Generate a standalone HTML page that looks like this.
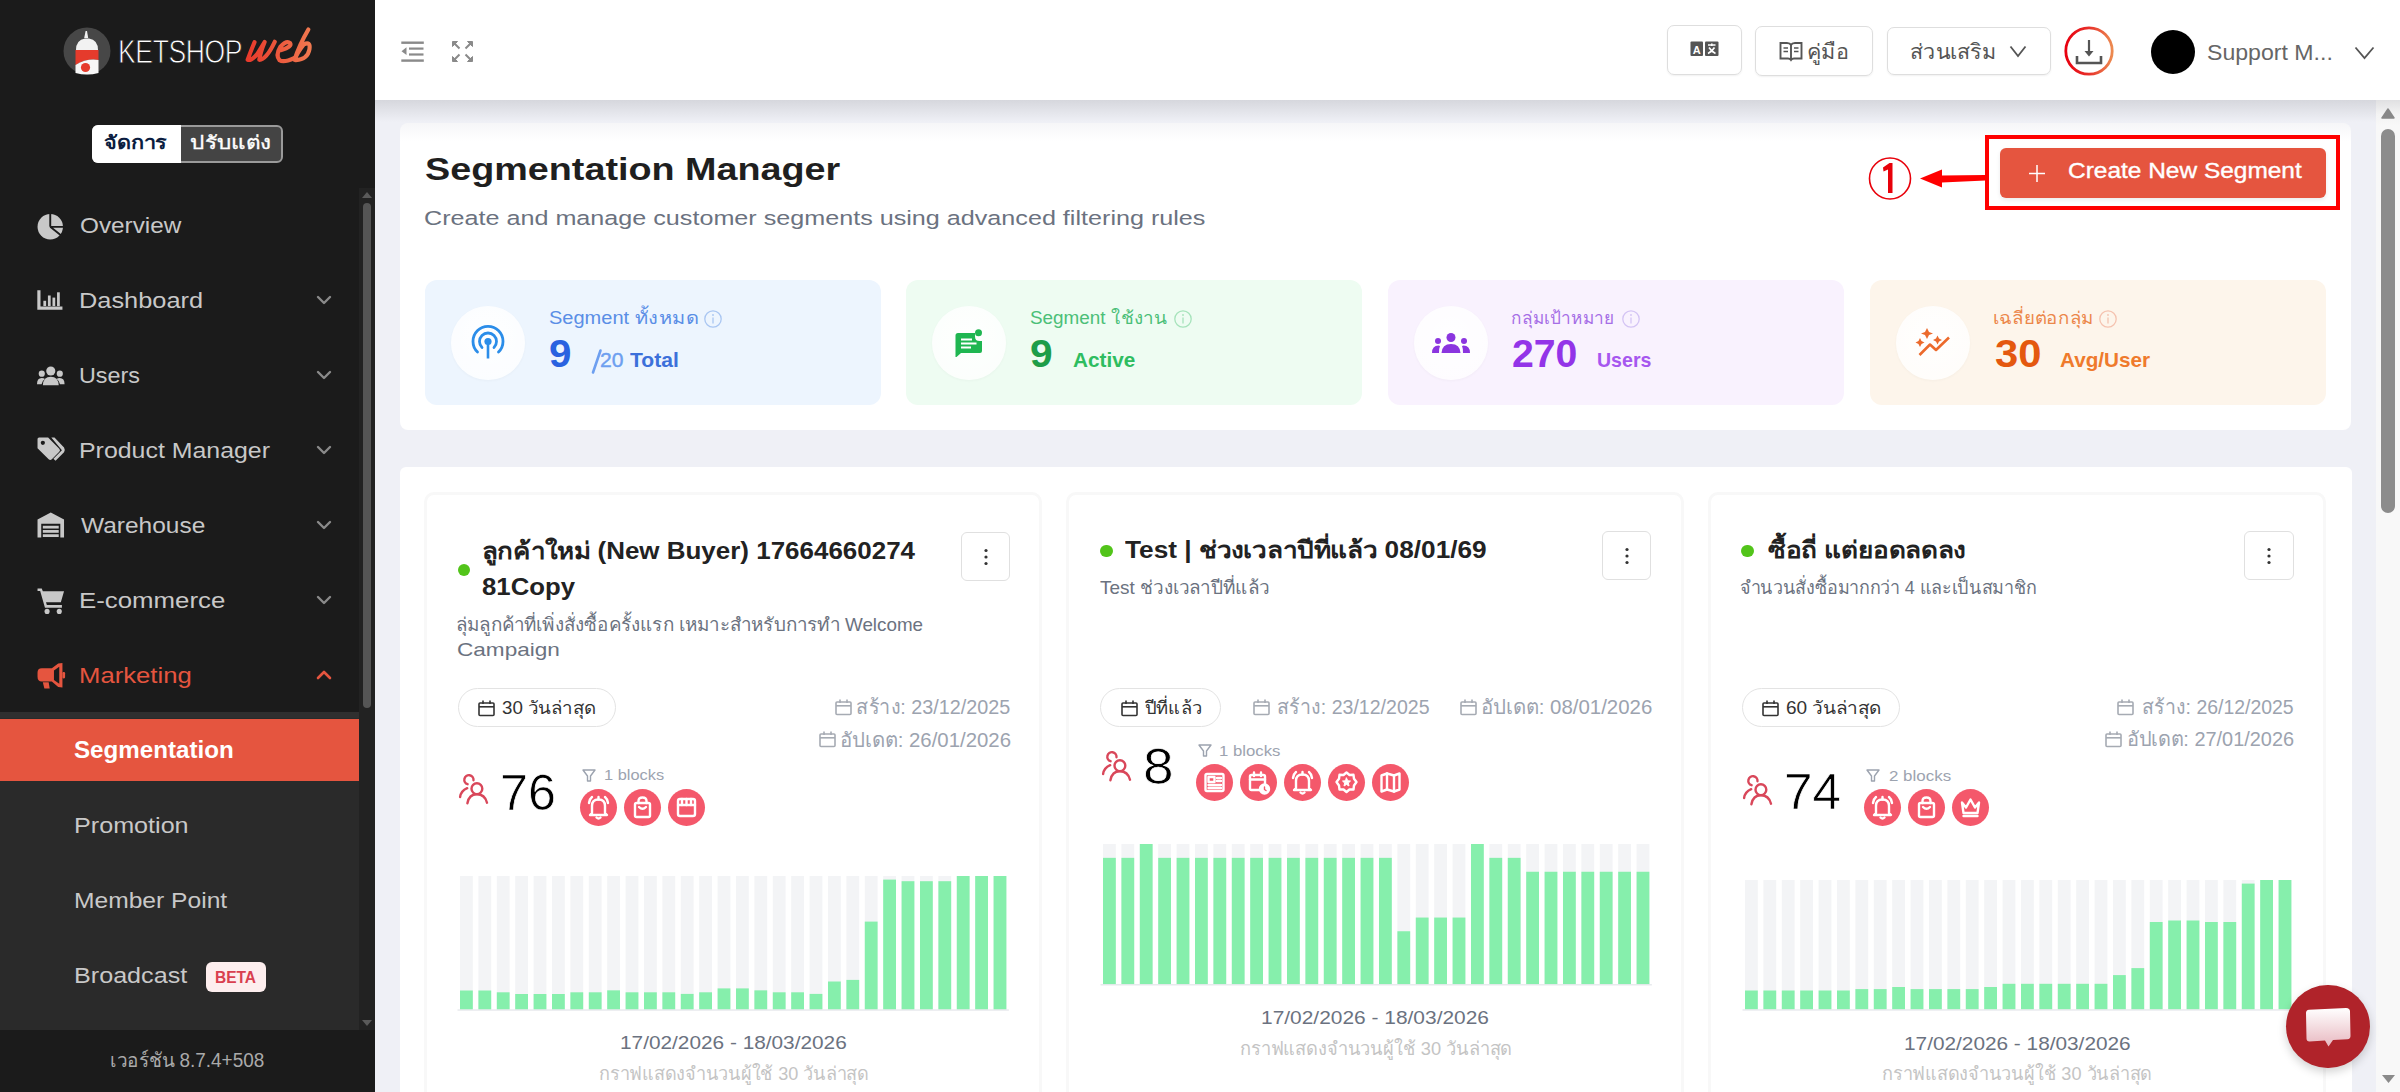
<!DOCTYPE html>
<html><head><meta charset="utf-8"><title>Segmentation Manager</title>
<style>
html,body{margin:0;padding:0;width:2400px;height:1092px;overflow:hidden;background:#eff0f6;font-family:"Liberation Sans",sans-serif;}
body{position:relative;}
</style></head><body>
<div style="position:absolute;left:0px;top:0px;width:375px;height:1092px;background:#1b1b1b"></div>
<svg style="position:absolute;left:63px;top:27px;overflow:visible;" width="48" height="48" viewBox="0 0 48 48"><circle cx="24" cy="24" r="23.5" fill="#474747"/>
<path d="M21.2 11 L22.6 4 L24 4 L25.2 11 Z" fill="#f2f2f2"/>
<path d="M13 23 Q13 13 22 11.5 L26 11.5 Q35 13 35 23 Z" fill="#f2f2f2"/>
<path d="M12.5 23 L35.5 23 L35.5 33 Q24 31 12.5 38 Z" fill="#e53b2c"/>
<path d="M12.5 38 Q24 31 35.5 33 L35.5 46 Q24 49 12.5 46 Z" fill="#f7f7f7"/>
<circle cx="22.5" cy="40.5" r="4.6" fill="#e53b2c"/></svg>
<div style="transform:scaleX(0.8176);position:absolute;left:117.55px;top:35.99px;font-family:'Liberation Sans', sans-serif;font-size:32.5px;line-height:32.5px;font-weight:400;color:#ffffff;white-space:nowrap;transform-origin:0 0;letter-spacing:-0.5px;-webkit-text-stroke:0.9px #1b1b1b">KETSHOP</div>
<svg style="position:absolute;left:240px;top:22px;overflow:visible;" width="80" height="48" viewBox="0 0 1820 1092"><defs><linearGradient id="wg" gradientUnits="userSpaceOnUse" x1="150" x2="1650" y1="0" y2="0"><stop offset="0" stop-color="#e8392b"/><stop offset="1" stop-color="#f07a50"/></linearGradient></defs>
<g fill="none" stroke="url(#wg)" stroke-width="95" stroke-linecap="round" stroke-linejoin="round">
<path d="M330 460 Q230 700 175 860 Q260 890 400 720 L560 455 Q460 700 440 860 Q600 850 790 450"/>
<path d="M940 640 Q1190 560 1140 480 Q1060 410 920 560 Q800 760 900 870 Q1000 930 1230 820"/>
<path d="M1555 170 Q1350 520 1240 860 Q1300 700 1450 510 Q1610 430 1580 620 Q1540 850 1270 870"/>
</g></svg>
<div style="position:absolute;left:92px;top:125px;width:191px;height:38px;background:#444;border:2px solid #9a9a9a;border-radius:6px;box-sizing:border-box"></div>
<div style="position:absolute;left:92px;top:125px;width:89px;height:38px;background:#fff;border-radius:6px 0 0 6px"></div>
<div style="transform:scaleX(1.1698);position:absolute;left:103.83px;top:133.84px;font-family:'Liberation Sans', sans-serif;font-size:18.5px;line-height:18.5px;font-weight:700;color:#0b1d40;white-space:nowrap;transform-origin:0 0;">จัดการ</div>
<div style="transform:scaleX(1.2154);position:absolute;left:189.78px;top:133.84px;font-family:'Liberation Sans', sans-serif;font-size:18.5px;line-height:18.5px;font-weight:400;color:#ffffff;white-space:nowrap;transform-origin:0 0;-webkit-text-stroke:0.35px #fff">ปรับแต่ง</div>
<div style="transform:scaleX(1.1055);position:absolute;left:79.89px;top:215.08px;font-family:'Liberation Sans', sans-serif;font-size:22px;line-height:22px;font-weight:400;color:#c8c8c8;white-space:nowrap;transform-origin:0 0;">Overview</div>
<svg style="position:absolute;left:36.5px;top:211.5px;overflow:visible;transform:scale(1.06);transform-origin:0 0" width="28" height="28" viewBox="0 0 28 28"><circle cx="12.5" cy="14" r="12" fill="#c8c8c8"/>
<path d="M12.5 14 L12.5 0 M12.5 14 L27 14 M12.5 14 L24 23" stroke="#1b1b1b" stroke-width="1.8"/></svg>
<div style="transform:scaleX(1.1524);position:absolute;left:78.70px;top:290.08px;font-family:'Liberation Sans', sans-serif;font-size:22px;line-height:22px;font-weight:400;color:#c8c8c8;white-space:nowrap;transform-origin:0 0;">Dashboard</div>
<svg style="position:absolute;left:36.5px;top:286.5px;overflow:visible;transform:scale(1.06);transform-origin:0 0" width="28" height="28" viewBox="0 0 28 28"><path d="M1.8 3 L1.8 20 L24 20" fill="none" stroke="#c8c8c8" stroke-width="3"/>
<rect x="6" y="13" width="2.6" height="5" fill="#c8c8c8"/><rect x="10.3" y="8" width="2.6" height="10" fill="#c8c8c8"/>
<rect x="14.6" y="10" width="2.6" height="8" fill="#c8c8c8"/><rect x="18.9" y="5" width="2.6" height="13" fill="#c8c8c8"/></svg>
<svg style="position:absolute;left:316px;top:294px;overflow:visible;" width="16" height="12" viewBox="0 0 16 12"><path d="M2 3 L8 9 L14 3" fill="none" stroke="#8a8a8a" stroke-width="2.4" stroke-linecap="round" stroke-linejoin="round"/></svg>
<div style="transform:scaleX(1.0618);position:absolute;left:78.88px;top:365.08px;font-family:'Liberation Sans', sans-serif;font-size:22px;line-height:22px;font-weight:400;color:#c8c8c8;white-space:nowrap;transform-origin:0 0;">Users</div>
<svg style="position:absolute;left:36.5px;top:361.5px;overflow:visible;transform:scale(1.06);transform-origin:0 0" width="28" height="28" viewBox="0 0 28 28"><circle cx="13" cy="8.5" r="4.3" fill="#c8c8c8"/><path d="M5.5 22 Q6 14 13 14 Q20 14 20.5 22 Z" fill="#c8c8c8"/>
<circle cx="4.5" cy="11" r="2.9" fill="#c8c8c8"/><path d="M0 21 Q0 15 4.5 15 Q6.5 15 7.5 16 Q4.5 18 4.3 21 Z" fill="#c8c8c8"/>
<circle cx="21.5" cy="11" r="2.9" fill="#c8c8c8"/><path d="M26 21 Q26 15 21.5 15 Q19.5 15 18.5 16 Q21.5 18 21.7 21 Z" fill="#c8c8c8"/></svg>
<svg style="position:absolute;left:316px;top:369px;overflow:visible;" width="16" height="12" viewBox="0 0 16 12"><path d="M2 3 L8 9 L14 3" fill="none" stroke="#8a8a8a" stroke-width="2.4" stroke-linecap="round" stroke-linejoin="round"/></svg>
<div style="transform:scaleX(1.1317);position:absolute;left:78.74px;top:440.08px;font-family:'Liberation Sans', sans-serif;font-size:22px;line-height:22px;font-weight:400;color:#c8c8c8;white-space:nowrap;transform-origin:0 0;">Product Manager</div>
<svg style="position:absolute;left:36.5px;top:436.5px;overflow:visible;transform:scale(1.06);transform-origin:0 0" width="28" height="28" viewBox="0 0 28 28"><path d="M0.5 2 L0.5 10.5 L11 21 Q12.5 22.5 14 21 L21 14 Q22.5 12.5 21 11 L10.5 0.5 L2 0.5 Q0.5 0.5 0.5 2 Z" fill="#c8c8c8"/>
<circle cx="5.5" cy="5.5" r="2" fill="#1b1b1b"/>
<path d="M13.5 0.5 L16.5 0.5 L25.5 10 Q27 12.5 25.5 14.5 L17.5 22.5 L15.5 20.5 L23.5 12.5 Z" fill="#c8c8c8"/></svg>
<svg style="position:absolute;left:316px;top:444px;overflow:visible;" width="16" height="12" viewBox="0 0 16 12"><path d="M2 3 L8 9 L14 3" fill="none" stroke="#8a8a8a" stroke-width="2.4" stroke-linecap="round" stroke-linejoin="round"/></svg>
<div style="transform:scaleX(1.1126);position:absolute;left:81.00px;top:515.08px;font-family:'Liberation Sans', sans-serif;font-size:22px;line-height:22px;font-weight:400;color:#c8c8c8;white-space:nowrap;transform-origin:0 0;">Warehouse</div>
<svg style="position:absolute;left:36.5px;top:511.5px;overflow:visible;transform:scale(1.06);transform-origin:0 0" width="28" height="28" viewBox="0 0 28 28"><path d="M0.5 7 L13 0.5 L25.5 7 L25.5 24 L22 24 L22 11 L4 11 L4 24 L0.5 24 Z" fill="#c8c8c8"/>
<rect x="5.5" y="13" width="15" height="2.6" fill="#c8c8c8"/><rect x="5.5" y="17" width="15" height="2.6" fill="#c8c8c8"/><rect x="5.5" y="21" width="15" height="2.6" fill="#c8c8c8"/></svg>
<svg style="position:absolute;left:316px;top:519px;overflow:visible;" width="16" height="12" viewBox="0 0 16 12"><path d="M2 3 L8 9 L14 3" fill="none" stroke="#8a8a8a" stroke-width="2.4" stroke-linecap="round" stroke-linejoin="round"/></svg>
<div style="transform:scaleX(1.1738);position:absolute;left:78.65px;top:590.08px;font-family:'Liberation Sans', sans-serif;font-size:22px;line-height:22px;font-weight:400;color:#c8c8c8;white-space:nowrap;transform-origin:0 0;">E-commerce</div>
<svg style="position:absolute;left:36.5px;top:586.5px;overflow:visible;transform:scale(1.06);transform-origin:0 0" width="28" height="28" viewBox="0 0 28 28"><path d="M0.5 1.5 L4.5 1.5 L5.5 4 L25.5 4 L22.5 14.5 L8.5 14.5 L9.3 17 L23.5 17 L23.5 19.5 L7.5 19.5 L3 3.8 L0.5 3.8 Z" fill="#c8c8c8"/>
<circle cx="9.5" cy="23" r="2.4" fill="#c8c8c8"/><circle cx="21" cy="23" r="2.4" fill="#c8c8c8"/></svg>
<svg style="position:absolute;left:316px;top:594px;overflow:visible;" width="16" height="12" viewBox="0 0 16 12"><path d="M2 3 L8 9 L14 3" fill="none" stroke="#8a8a8a" stroke-width="2.4" stroke-linecap="round" stroke-linejoin="round"/></svg>
<div style="transform:scaleX(1.1667);position:absolute;left:78.67px;top:665.08px;font-family:'Liberation Sans', sans-serif;font-size:22px;line-height:22px;font-weight:400;color:#e5553f;white-space:nowrap;transform-origin:0 0;">Marketing</div>
<svg style="position:absolute;left:36.5px;top:661.5px;overflow:visible;transform:scale(1.06);transform-origin:0 0" width="28" height="28" viewBox="0 0 28 28"><path d="M20 1.5 L24 1 L24 24 L20 23.5 L14 18.5 L6 18.5 L4.5 18.5 Q0.5 18.5 0.5 14 L0.5 10 Q0.5 6 4.5 6 L14 6 Z" fill="#e5553f"/>
<path d="M16 8 L21 4.5 L21 20.5 L16 17 Z" fill="#1b1b1b"/>
<path d="M5.5 19 L11 19 L12 25 L7 25 Z" fill="#e5553f"/>
<rect x="24" y="9.5" width="2.5" height="6" rx="1" fill="#e5553f"/></svg>
<svg style="position:absolute;left:316px;top:669px;overflow:visible;" width="16" height="12" viewBox="0 0 16 12"><path d="M2 9 L8 3 L14 9" fill="none" stroke="#e5553f" stroke-width="2.6" stroke-linecap="round" stroke-linejoin="round"/></svg>
<div style="position:absolute;left:0px;top:712px;width:359px;height:318px;background:#2a2a2a"></div>
<div style="position:absolute;left:0px;top:712px;width:359px;height:6px;background:#2f2f2f"></div>
<div style="position:absolute;left:0px;top:718.5px;width:359px;height:62.5px;background:#e5553f"></div>
<div style="transform:scaleX(1.0500);position:absolute;left:73.95px;top:739.23px;font-family:'Liberation Sans', sans-serif;font-size:23.0px;line-height:23.0px;font-weight:700;color:#ffffff;white-space:nowrap;transform-origin:0 0;">Segmentation</div>
<div style="transform:scaleX(1.1429);position:absolute;left:73.79px;top:815.08px;font-family:'Liberation Sans', sans-serif;font-size:22.0px;line-height:22.0px;font-weight:400;color:#c8c8c8;white-space:nowrap;transform-origin:0 0;">Promotion</div>
<div style="transform:scaleX(1.1185);position:absolute;left:73.82px;top:890.08px;font-family:'Liberation Sans', sans-serif;font-size:22.0px;line-height:22.0px;font-weight:400;color:#c8c8c8;white-space:nowrap;transform-origin:0 0;">Member Point</div>
<div style="transform:scaleX(1.1429);position:absolute;left:73.79px;top:965.08px;font-family:'Liberation Sans', sans-serif;font-size:22.0px;line-height:22.0px;font-weight:400;color:#c8c8c8;white-space:nowrap;transform-origin:0 0;">Broadcast</div>
<div style="position:absolute;left:206px;top:961.5px;width:60px;height:30px;background:#fdeeee;border-radius:6px"></div>
<div style="transform:scaleX(0.9683);position:absolute;left:215.03px;top:969.86px;font-family:'Liberation Sans', sans-serif;font-size:16.0px;line-height:16.0px;font-weight:700;color:#d9404f;white-space:nowrap;transform-origin:0 0;">BETA</div>
<div style="position:absolute;left:359px;top:188px;width:16px;height:842px;background:#222222"></div>
<svg style="position:absolute;left:361px;top:190px;overflow:visible;" width="12" height="10" viewBox="0 0 12 10"><path d="M1 8 L6 2 L11 8 Z" fill="#5a5a5a"/></svg>
<div style="position:absolute;left:362.5px;top:203px;width:8.5px;height:505px;background:#555;border-radius:5px"></div>
<svg style="position:absolute;left:361px;top:1018px;overflow:visible;" width="12" height="10" viewBox="0 0 12 10"><path d="M1 2 L6 8 L11 2 Z" fill="#5a5a5a"/></svg>
<div style="position:absolute;left:0px;top:1030px;width:375px;height:62px;background:#1b1b1b"></div>
<div style="transform:scaleX(0.9720);position:absolute;left:110.03px;top:1050.89px;font-family:'Liberation Sans', sans-serif;font-size:19.5px;line-height:19.5px;font-weight:400;color:#aaaaaa;white-space:nowrap;transform-origin:0 0;">เวอร์ชัน 8.7.4+508</div>
<div style="position:absolute;left:375px;top:0px;width:2025px;height:100px;background:#ffffff"></div>
<div style="position:absolute;left:375px;top:100px;width:2025px;height:22px;background:linear-gradient(#d6d7dd,#eff0f6)"></div>
<svg style="position:absolute;left:401px;top:41px;overflow:visible;" width="24" height="21" viewBox="0 0 24 21"><g fill="#8a8a8a"><rect x="0.3" y="0.5" width="22.5" height="2.4"/><rect x="8" y="6.5" width="14.5" height="2.2"/>
<rect x="8" y="12.4" width="14.5" height="2.2"/><rect x="0.3" y="18.4" width="22.5" height="2.4"/>
<path d="M5.5 6.3 L5.5 14 L0.5 10.2 Z"/></g></svg>
<svg style="position:absolute;left:452px;top:41px;overflow:visible;" width="21" height="21" viewBox="0 0 21 21"><g stroke="#8a8a8a" stroke-width="2" fill="#8a8a8a">
<path d="M1.5 1.5 L7.5 7.5 M19.5 1.5 L13.5 7.5 M1.5 19.5 L7.5 13.5 M19.5 19.5 L13.5 13.5" fill="none"/>
<path d="M0.5 0.5 L5.5 0.5 L0.5 5.5 Z M20.5 0.5 L15.5 0.5 L20.5 5.5 Z M0.5 20.5 L5.5 20.5 L0.5 15.5 Z M20.5 20.5 L15.5 20.5 L20.5 15.5 Z" stroke-width="1"/>
</g></svg>
<div style="position:absolute;left:1666.5px;top:25px;width:75px;height:49.5px;border:1.5px solid #dedede;border-radius:7px;box-sizing:border-box;box-shadow:0 1px 2px rgba(0,0,0,.06)"></div>
<svg style="position:absolute;left:1690px;top:41px;overflow:visible;" width="30" height="16" viewBox="0 0 30 16"><rect x="0.5" y="0.5" width="12.5" height="14.5" rx="1" fill="#555"/><rect x="15" y="0.5" width="13.5" height="14.5" rx="1" fill="#555"/>
<text x="6.8" y="12.5" font-family="Liberation Sans" font-weight="700" font-size="11" fill="#fff" text-anchor="middle">A</text>
<path d="M18 4 L25.5 4 M21.8 2.5 L21.8 5 M19 6.5 Q21.5 10.5 25.5 12.5 M24.5 6.5 Q22 10.5 18 12.5" stroke="#fff" stroke-width="1.6" fill="none"/></svg>
<div style="position:absolute;left:1755px;top:26px;width:118px;height:49.5px;border:1.5px solid #dedede;border-radius:7px;box-sizing:border-box;box-shadow:0 1px 2px rgba(0,0,0,.06)"></div>
<svg style="position:absolute;left:1779px;top:41px;overflow:visible;" width="24" height="20" viewBox="0 0 24 20"><path d="M1.5 2 L8 2 Q11 2 12 4 Q13 2 16 2 L22.5 2 L22.5 17.5 L15 17.5 Q13 17.5 12 19 Q11 17.5 9 17.5 L1.5 17.5 Z M12 4 L12 19" fill="none" stroke="#555" stroke-width="1.9"/>
<path d="M4.5 7 L9 7 M4.5 10.5 L9 10.5 M15 7 L19.5 7 M15 10.5 L19.5 10.5" stroke="#555" stroke-width="1.6"/></svg>
<div style="transform:scaleX(1.0270);position:absolute;left:1806.95px;top:40.92px;font-family:'Liberation Sans', sans-serif;font-size:21.0px;line-height:21.0px;font-weight:400;color:#555555;white-space:nowrap;transform-origin:0 0;">คู่มือ</div>
<div style="position:absolute;left:1886.5px;top:26.5px;width:164px;height:48.5px;border:1.5px solid #dedede;border-radius:7px;box-sizing:border-box;box-shadow:0 1px 2px rgba(0,0,0,.06)"></div>
<div style="transform:scaleX(1.0247);position:absolute;left:1909.98px;top:40.92px;font-family:'Liberation Sans', sans-serif;font-size:21.0px;line-height:21.0px;font-weight:400;color:#555555;white-space:nowrap;transform-origin:0 0;">ส่วนเสริม</div>
<svg style="position:absolute;left:2009px;top:45px;overflow:visible;" width="18" height="13" viewBox="0 0 18 13"><path d="M1.5 1.5 L9 11 L16.5 1.5" fill="none" stroke="#555" stroke-width="1.8"/></svg>
<svg style="position:absolute;left:2063px;top:25px;overflow:visible;" width="52" height="52" viewBox="0 0 52 52"><defs><linearGradient id="dg" x1="0" x2="1" y1="0" y2="0"><stop offset="0" stop-color="#e8000f"/><stop offset="0.5" stop-color="#e8302a"/><stop offset="1" stop-color="#ec8a50"/></linearGradient></defs>
<circle cx="26" cy="26" r="23.2" fill="none" stroke="url(#dg)" stroke-width="2.8"/>
<path d="M26 15 L26 28" stroke="#555" stroke-width="2.2"/><path d="M21.5 26 L26 31.5 L30.5 26 Z" fill="#555"/>
<path d="M14 31 L14 38 L38 38 L38 31" fill="none" stroke="#555" stroke-width="2.6"/></svg>
<div style="position:absolute;left:2151px;top:30px;width:44px;height:44px;background:#000;border-radius:50%"></div>
<div style="transform:scaleX(1.0746);position:absolute;left:2206.89px;top:42.50px;font-family:'Liberation Sans', sans-serif;font-size:21.5px;line-height:21.5px;font-weight:400;color:#666666;white-space:nowrap;transform-origin:0 0;">Support M...</div>
<svg style="position:absolute;left:2354px;top:46px;overflow:visible;" width="21" height="14" viewBox="0 0 21 14"><path d="M1.5 1.5 L10.5 12 L19.5 1.5" fill="none" stroke="#555" stroke-width="1.8"/></svg>
<div style="position:absolute;left:2376px;top:100px;width:24px;height:992px;background:linear-gradient(#e0e0e2 0px,#f3f3f3 14px,#f8f8f8 26px)"></div>
<svg style="position:absolute;left:2380px;top:107px;overflow:visible;" width="16" height="13" viewBox="0 0 16 13"><path d="M2 11 L8 2 L14 11 Z" fill="#888" stroke="#888" stroke-width="1.5" stroke-linejoin="round"/></svg>
<div style="position:absolute;left:2381px;top:128.5px;width:14px;height:384px;background:#8c8c8c;border-radius:7px"></div>
<svg style="position:absolute;left:2381px;top:1073px;overflow:visible;" width="15" height="12" viewBox="0 0 15 12"><path d="M1 2 L7.5 10 L14 2 Z" fill="#8a8a8a"/></svg>
<div style="position:absolute;left:400px;top:122.5px;width:1951px;height:307.5px;background:linear-gradient(#f6f6f8 0px,#fbfbfc 10px,#fff 18px);border-radius:8px"></div>
<div style="transform:scaleX(1.1795);position:absolute;left:424.82px;top:153.01px;font-family:'Liberation Sans', sans-serif;font-size:32.0px;line-height:32.0px;font-weight:700;color:#1f1f1f;white-space:nowrap;transform-origin:0 0;">Segmentation Manager</div>
<div style="transform:scaleX(1.3043);position:absolute;left:423.70px;top:209.06px;font-family:'Liberation Sans', sans-serif;font-size:19.3px;line-height:19.3px;font-weight:400;color:#6b7280;white-space:nowrap;transform-origin:0 0;">Create and manage customer segments using advanced filtering rules</div>
<div style="position:absolute;left:2000px;top:147.5px;width:326px;height:50px;background:#e5553f;border-radius:6px;box-shadow:0 2px 4px rgba(0,0,0,.08)"></div>
<svg style="position:absolute;left:2028px;top:164px;overflow:visible;" width="18" height="19" viewBox="0 0 18 19"><path d="M9 1 L9 18 M1 9.5 L17 9.5" stroke="#fff" stroke-width="1.5"/></svg>
<div style="transform:scaleX(1.1373);position:absolute;left:2067.86px;top:161.25px;font-family:'Liberation Sans', sans-serif;font-size:21.5px;line-height:21.5px;font-weight:400;color:#ffffff;white-space:nowrap;transform-origin:0 0;-webkit-text-stroke:0.35px #fff">Create New Segment</div>
<div style="position:absolute;left:1985px;top:135px;width:355px;height:74.5px;border:4.8px solid #ff0000;box-sizing:border-box"></div>
<svg style="position:absolute;left:1868px;top:157px;overflow:visible;" width="44" height="44" viewBox="0 0 44 44"><circle cx="22" cy="21.5" r="20.5" fill="none" stroke="#e8000a" stroke-width="1.6"/></svg>
<svg style="position:absolute;left:1880px;top:162px;overflow:visible;" width="16" height="32" viewBox="0 0 16 32"><path d="M3 5.5 L9.5 1 L12.5 1 L12.5 31 L8 31 L8 7.5 L3.5 9.5 Z" fill="#e8000a"/></svg>
<svg style="position:absolute;left:1918px;top:166px;overflow:visible;" width="70" height="26" viewBox="0 0 70 26"><path d="M24 9.5 L67.5 9 L67.5 14.5 L24 16.5 Z" fill="#ff0000"/><path d="M2 12.5 L24 3.5 L24 21.5 Z" fill="#ff0000"/></svg>
<svg style="position:absolute;left:590px;top:348px;overflow:visible;z-index:2" width="14" height="26" viewBox="0 0 14 26"><path d="M3 24.5 L10.5 2.5" stroke="#6d9ff0" stroke-width="2.6" stroke-linecap="round"/></svg>
<div style="position:absolute;left:425px;top:280px;width:456px;height:125px;background:#edf5fe;border-radius:12px"></div>
<div style="position:absolute;left:450.5px;top:305.5px;width:74px;height:74px;background:radial-gradient(circle at 50% 40%,rgba(255,255,255,.95),rgba(255,255,255,.75));border-radius:50%;box-shadow:0 1px 3px rgba(0,0,0,.03)"></div>
<svg style="position:absolute;left:470.6px;top:325.6px;overflow:visible;" width="34" height="34" viewBox="0 0 34 34"><g stroke="#2b8de9" fill="none" stroke-width="2.8" stroke-linecap="round">
<path d="M6.5 26 A15 15 0 1 1 27.5 26"/><path d="M11 21.5 A8.5 8.5 0 1 1 23 21.5"/>
<path d="M17 16 L17 32.5" stroke-width="2.6" stroke-linecap="butt"/></g>
<circle cx="17" cy="15.5" r="3.6" fill="#2b8de9"/></svg>
<div style="transform:scaleX(1.1434);position:absolute;left:548.93px;top:309.64px;font-family:'Liberation Sans', sans-serif;font-size:17.5px;line-height:17.5px;font-weight:400;color:#5a8ee6;white-space:nowrap;transform-origin:0 0;">Segment ทั้งหมด</div>
<svg style="position:absolute;left:704px;top:310px;overflow:visible;" width="18" height="18" viewBox="0 0 18 18"><circle cx="9" cy="9" r="8.2" fill="none" stroke="#a9c6f2" stroke-width="1.3"/><path d="M9 7.5 L9 13.5" stroke="#a9c6f2" stroke-width="1.3"/><circle cx="9" cy="5" r="0.9" fill="#a9c6f2"/></svg>
<div style="transform:scaleX(1.0211);position:absolute;left:548.56px;top:334.46px;font-family:'Liberation Sans', sans-serif;font-size:39.5px;line-height:39.5px;font-weight:700;color:#2a62e0;white-space:nowrap;transform-origin:0 0;">9</div>
<div style="transform:scaleX(1.0667);position:absolute;left:600.17px;top:350.84px;font-family:'Liberation Sans', sans-serif;font-size:19.8px;line-height:19.8px;font-weight:400;color:#6d9ff0;white-space:nowrap;transform-origin:0 0;-webkit-text-stroke:0.4px #6d9ff0">20</div>
<div style="transform:scaleX(1.0667);position:absolute;left:630.00px;top:350.84px;font-family:'Liberation Sans', sans-serif;font-size:19.8px;line-height:19.8px;font-weight:700;color:#3c70da;white-space:nowrap;transform-origin:0 0;">Total</div>
<div style="position:absolute;left:906px;top:280px;width:456px;height:125px;background:#eefcf2;border-radius:12px"></div>
<div style="position:absolute;left:931.5px;top:305.5px;width:74px;height:74px;background:radial-gradient(circle at 50% 40%,rgba(255,255,255,.95),rgba(255,255,255,.75));border-radius:50%;box-shadow:0 1px 3px rgba(0,0,0,.03)"></div>
<svg style="position:absolute;left:955px;top:329px;overflow:visible;" width="28" height="28" viewBox="0 0 28 28"><path d="M3 4 L20 4 L20 7.5 Q20 12 24.5 12 L27 12 L27 22 Q27 24 25 24 L6 24 L1.5 28 L0.5 28 L0.5 6.5 Q0.5 4 3 4 Z" fill="#1fb651"/>
<circle cx="23.5" cy="3.8" r="3.5" fill="#1fb651"/>
<rect x="6" y="9.5" width="11" height="2" fill="#fff"/><rect x="6" y="13.5" width="15.5" height="2" fill="#fff"/><rect x="6" y="17.5" width="10" height="2" fill="#fff"/></svg>
<div style="transform:scaleX(1.0794);position:absolute;left:1029.96px;top:309.64px;font-family:'Liberation Sans', sans-serif;font-size:17.5px;line-height:17.5px;font-weight:400;color:#4bbf78;white-space:nowrap;transform-origin:0 0;">Segment ใช้งาน</div>
<svg style="position:absolute;left:1174px;top:310px;overflow:visible;" width="18" height="18" viewBox="0 0 18 18"><circle cx="9" cy="9" r="8.2" fill="none" stroke="#a6e3bb" stroke-width="1.3"/><path d="M9 7.5 L9 13.5" stroke="#a6e3bb" stroke-width="1.3"/><circle cx="9" cy="5" r="0.9" fill="#a6e3bb"/></svg>
<div style="transform:scaleX(1.0316);position:absolute;left:1029.54px;top:334.46px;font-family:'Liberation Sans', sans-serif;font-size:39.5px;line-height:39.5px;font-weight:700;color:#1e9d48;white-space:nowrap;transform-origin:0 0;">9</div>
<div style="transform:scaleX(1.0474);position:absolute;left:1072.95px;top:350.84px;font-family:'Liberation Sans', sans-serif;font-size:19.8px;line-height:19.8px;font-weight:700;color:#2ebd60;white-space:nowrap;transform-origin:0 0;">Active</div>
<div style="position:absolute;left:1388px;top:280px;width:456px;height:125px;background:#f9f2fe;border-radius:12px"></div>
<div style="position:absolute;left:1413.5px;top:305.5px;width:74px;height:74px;background:radial-gradient(circle at 50% 40%,rgba(255,255,255,.95),rgba(255,255,255,.75));border-radius:50%;box-shadow:0 1px 3px rgba(0,0,0,.03)"></div>
<svg style="position:absolute;left:1432px;top:332.5px;overflow:visible;" width="38" height="20" viewBox="0 0 38 20"><g fill="#8b35df"><circle cx="19" cy="4.5" r="4.5"/><path d="M9.5 20 Q10 11 19 11 Q28 11 28.5 20 Z"/>
<circle cx="6" cy="8" r="3"/><path d="M0 20 Q0 12.5 6.5 12.5 L8 13 Q7 15 7 20 Z"/>
<circle cx="32" cy="8" r="3"/><path d="M38 20 Q38 12.5 31.5 12.5 L30 13 Q31 15 31 20 Z"/></g></svg>
<div style="transform:scaleX(0.9806);position:absolute;left:1511.03px;top:309.64px;font-family:'Liberation Sans', sans-serif;font-size:17.5px;line-height:17.5px;font-weight:400;color:#a66ee6;white-space:nowrap;transform-origin:0 0;">กลุ่มเป้าหมาย</div>
<svg style="position:absolute;left:1621.5px;top:310px;overflow:visible;" width="18" height="18" viewBox="0 0 18 18"><circle cx="9" cy="9" r="8.2" fill="none" stroke="#d4c4f4" stroke-width="1.3"/><path d="M9 7.5 L9 13.5" stroke="#d4c4f4" stroke-width="1.3"/><circle cx="9" cy="5" r="0.9" fill="#d4c4f4"/></svg>
<div style="transform:scaleX(0.9921);position:absolute;left:1511.61px;top:334.46px;font-family:'Liberation Sans', sans-serif;font-size:39.5px;line-height:39.5px;font-weight:700;color:#9334e8;white-space:nowrap;transform-origin:0 0;">270</div>
<div style="transform:scaleX(0.9887);position:absolute;left:1597.21px;top:350.84px;font-family:'Liberation Sans', sans-serif;font-size:19.8px;line-height:19.8px;font-weight:700;color:#a657ef;white-space:nowrap;transform-origin:0 0;">Users</div>
<div style="position:absolute;left:1870px;top:280px;width:456px;height:125px;background:#fdf5eb;border-radius:12px"></div>
<div style="position:absolute;left:1895.5px;top:305.5px;width:74px;height:74px;background:radial-gradient(circle at 50% 40%,rgba(255,255,255,.95),rgba(255,255,255,.75));border-radius:50%;box-shadow:0 1px 3px rgba(0,0,0,.03)"></div>
<svg style="position:absolute;left:1915.6px;top:327.5px;overflow:visible;" width="34" height="28" viewBox="0 0 34 28"><g fill="#ec6a2c"><path d="M11 0 L13 4 L17 5.5 L13 7 L11 11 L9 7 L5 5.5 L9 4 Z"/>
<path d="M4 10 L5.5 13 L8.5 14.5 L5.5 16 L4 19 L2.5 16 L-0.5 14.5 L2.5 13 Z"/>
<path d="M21.5 7.5 L23 10.5 L26 12 L23 13.5 L21.5 16.5 L20 13.5 L17 12 L20 10.5 Z"/></g>
<path d="M3.5 27 L14 16.5 L20 22 L33 9.5" fill="none" stroke="#ec6a2c" stroke-width="2.6" stroke-linejoin="round"/></svg>
<div style="transform:scaleX(1.0652);position:absolute;left:1992.90px;top:309.64px;font-family:'Liberation Sans', sans-serif;font-size:17.5px;line-height:17.5px;font-weight:400;color:#ec874a;white-space:nowrap;transform-origin:0 0;">เฉลี่ยต่อกลุ่ม</div>
<svg style="position:absolute;left:2099px;top:310px;overflow:visible;" width="18" height="18" viewBox="0 0 18 18"><circle cx="9" cy="9" r="8.2" fill="none" stroke="#f5c3b0" stroke-width="1.3"/><path d="M9 7.5 L9 13.5" stroke="#f5c3b0" stroke-width="1.3"/><circle cx="9" cy="5" r="0.9" fill="#f5c3b0"/></svg>
<div style="transform:scaleX(1.0571);position:absolute;left:1994.56px;top:334.46px;font-family:'Liberation Sans', sans-serif;font-size:39.5px;line-height:39.5px;font-weight:700;color:#e4580f;white-space:nowrap;transform-origin:0 0;">30</div>
<div style="transform:scaleX(1.0471);position:absolute;left:2059.95px;top:350.84px;font-family:'Liberation Sans', sans-serif;font-size:19.8px;line-height:19.8px;font-weight:700;color:#ef7a2c;white-space:nowrap;transform-origin:0 0;">Avg/User</div>
<div style="position:absolute;left:400px;top:467px;width:1952px;height:640px;background:#fff;border-radius:6px"></div>
<div style="position:absolute;left:424px;top:492px;width:618px;height:620px;background:#fff;border:3px solid #f8f8f8;border-radius:10px;box-sizing:border-box"></div>
<div style="position:absolute;left:1066px;top:492px;width:618px;height:620px;background:#fff;border:3px solid #f8f8f8;border-radius:10px;box-sizing:border-box"></div>
<div style="position:absolute;left:1708px;top:492px;width:618px;height:620px;background:#fff;border:3px solid #f8f8f8;border-radius:10px;box-sizing:border-box"></div>
<div style="position:absolute;left:457.5px;top:563.75px;width:12.5px;height:12.5px;background:#52c41a;border-radius:50%"></div>
<div style="transform:scaleX(1.1049);position:absolute;left:481.90px;top:539.56px;font-family:'Liberation Sans', sans-serif;font-size:23.5px;line-height:23.5px;font-weight:700;color:#222222;white-space:nowrap;transform-origin:0 0;">ลูกค้าใหม่ (New Buyer) 17664660274</div>
<div style="transform:scaleX(1.0952);position:absolute;left:481.90px;top:576.41px;font-family:'Liberation Sans', sans-serif;font-size:23.5px;line-height:23.5px;font-weight:700;color:#222222;white-space:nowrap;transform-origin:0 0;">81Copy</div>
<div style="transform:scaleX(1.0175);position:absolute;left:455.96px;top:615.64px;font-family:'Liberation Sans', sans-serif;font-size:18.5px;line-height:18.5px;font-weight:400;color:#6b7280;white-space:nowrap;transform-origin:0 0;">ลุ่มลูกค้าที่เพิ่งสั่งซื้อครั้งแรก เหมาะสำหรับการทำ Welcome</div>
<div style="transform:scaleX(1.2195);position:absolute;left:456.78px;top:641.04px;font-family:'Liberation Sans', sans-serif;font-size:18.5px;line-height:18.5px;font-weight:400;color:#6b7280;white-space:nowrap;transform-origin:0 0;">Campaign</div>
<div style="position:absolute;left:960.5px;top:531.5px;width:49.5px;height:49px;border:1.5px solid #e0e0e0;border-radius:6px;box-sizing:border-box;background:#fff"></div>
<svg style="position:absolute;left:982.5px;top:547.5px;overflow:visible;" width="6" height="18" viewBox="0 0 6 18"><circle cx="3" cy="2.5" r="1.6" fill="#333"/><circle cx="3" cy="9" r="1.6" fill="#333"/><circle cx="3" cy="15.5" r="1.6" fill="#333"/></svg>
<div style="position:absolute;left:457.5px;top:687.5px;width:158px;height:39.5px;border:1.5px solid #e3e3e3;border-radius:20px;box-sizing:border-box;background:#fff"></div>
<svg style="position:absolute;left:478.0px;top:699.5px;overflow:visible;" width="17" height="17" viewBox="0 0 17 17"><rect x="1" y="3" width="15" height="12.5" rx="1" fill="none" stroke="#333" stroke-width="1.6"/>
<path d="M1 6.8 L16 6.8" stroke="#333" stroke-width="1.6"/><path d="M5 0.5 L5 4 M12 0.5 L12 4" stroke="#333" stroke-width="1.6"/></svg>
<div style="transform:scaleX(1.0404);position:absolute;left:501.96px;top:699.26px;font-family:'Liberation Sans', sans-serif;font-size:18.0px;line-height:18.0px;font-weight:400;color:#333333;white-space:nowrap;transform-origin:0 0;">30 วันล่าสุด</div>
<svg style="position:absolute;left:834.5px;top:699px;overflow:visible;" width="17" height="17" viewBox="0 0 17 17"><rect x="1" y="3" width="15" height="12.5" rx="1" fill="none" stroke="#a6abb3" stroke-width="1.6"/>
<path d="M1 6.8 L16 6.8" stroke="#a6abb3" stroke-width="1.6"/><path d="M5 0.5 L5 4 M12 0.5 L12 4" stroke="#a6abb3" stroke-width="1.6"/></svg>
<div style="transform:scaleX(0.9646);position:absolute;left:856.24px;top:697.35px;font-family:'Liberation Sans', sans-serif;font-size:20.5px;line-height:20.5px;font-weight:400;color:#9ca3af;white-space:nowrap;transform-origin:0 0;">สร้าง: 23/12/2025</div>
<svg style="position:absolute;left:818.6px;top:731.4px;overflow:visible;" width="17" height="17" viewBox="0 0 17 17"><rect x="1" y="3" width="15" height="12.5" rx="1" fill="none" stroke="#a6abb3" stroke-width="1.6"/>
<path d="M1 6.8 L16 6.8" stroke="#a6abb3" stroke-width="1.6"/><path d="M5 0.5 L5 4 M12 0.5 L12 4" stroke="#a6abb3" stroke-width="1.6"/></svg>
<div style="transform:scaleX(0.9941);position:absolute;left:840.01px;top:729.75px;font-family:'Liberation Sans', sans-serif;font-size:20.5px;line-height:20.5px;font-weight:400;color:#9ca3af;white-space:nowrap;transform-origin:0 0;">อัปเดต: 26/01/2026</div>
<svg style="position:absolute;left:457.5px;top:774px;overflow:visible;" width="32" height="32" viewBox="0 0 32 32"><g fill="none" stroke="#d9475a" stroke-width="2.4" stroke-linecap="round">
<circle cx="18.9" cy="14.7" r="5.4"/><path d="M9.4 29.3 Q11 20.3 18.9 20.3 Q26.8 20.3 29 28.7"/>
<path d="M15.5 6.2 A4.6 4.6 0 1 0 9.6 10.2"/><path d="M2.1 23 Q3 16.8 9.2 14.2"/></g></svg>
<div style="transform:scaleX(1.0147);position:absolute;left:499.97px;top:767.80px;font-family:'Liberation Sans', sans-serif;font-size:49.5px;line-height:49.5px;font-weight:400;color:#000000;white-space:nowrap;transform-origin:0 0;-webkit-text-stroke:0.7px #fff">76</div>
<svg style="position:absolute;left:582px;top:768.5px;overflow:visible;" width="14" height="13" viewBox="0 0 14 13"><path d="M1 1 L13 1 L8.5 7 L8.5 12 L5.5 12 L5.5 7 Z" fill="none" stroke="#9ca3af" stroke-width="1.4" stroke-linejoin="round"/></svg>
<div style="transform:scaleX(1.1298);position:absolute;left:603.87px;top:768.03px;font-family:'Liberation Sans', sans-serif;font-size:14.5px;line-height:14.5px;font-weight:400;color:#9ca3af;white-space:nowrap;transform-origin:0 0;">1 blocks</div>
<svg style="position:absolute;left:579.5px;top:788.5px;overflow:visible;" width="37" height="37" viewBox="0 0 37 37"><circle cx="18.5" cy="18.5" r="18.5" fill="#f4586b"/><g fill="none" stroke="#fff" stroke-width="2.4" stroke-linecap="round" stroke-linejoin="round"><path d="M12 24 L12 17 Q12 10.5 18.5 10.5 Q25 10.5 25 17 L25 24 L27 26 L10 26 Z"/><path d="M16.5 28.5 Q18.5 30.5 20.5 28.5"/><path d="M9 14 Q9.5 10 12 8 M28 14 Q27.5 10 25 8"/><path d="M18.5 8 L18.5 10.5"/></g></svg>
<svg style="position:absolute;left:623.5px;top:788.5px;overflow:visible;" width="37" height="37" viewBox="0 0 37 37"><circle cx="18.5" cy="18.5" r="18.5" fill="#f4586b"/><g fill="none" stroke="#fff" stroke-width="2.4" stroke-linecap="round" stroke-linejoin="round"><rect x="11" y="14" width="15" height="14" rx="1.5"/><path d="M14.5 14 L14.5 12 Q14.5 8.5 18.5 8.5 Q22.5 8.5 22.5 12 L22.5 14"/><path d="M15 18 Q18.5 21.5 22 18"/></g></svg>
<svg style="position:absolute;left:667.5px;top:788.5px;overflow:visible;" width="37" height="37" viewBox="0 0 37 37"><circle cx="18.5" cy="18.5" r="18.5" fill="#f4586b"/><g fill="none" stroke="#fff" stroke-width="2.4" stroke-linecap="round" stroke-linejoin="round"><rect x="10" y="10" width="17" height="17" rx="2"/><path d="M10 16 L27 16"/><path d="M14 10 L14 16 M18.5 10 L18.5 16 M23 10 L23 16"/></g></svg>
<svg style="position:absolute;left:460.1px;top:876.1px;overflow:visible;" width="546.4" height="135.6" viewBox="0 0 546.4 135.6"><rect x="0.00" y="0" width="12.8" height="133.60" fill="#f3f4f6"/><rect x="0.00" y="114.50" width="12.8" height="19.10" fill="#86efac"/><rect x="18.40" y="0" width="12.8" height="133.60" fill="#f3f4f6"/><rect x="18.40" y="114.50" width="12.8" height="19.10" fill="#86efac"/><rect x="36.80" y="0" width="12.8" height="133.60" fill="#f3f4f6"/><rect x="36.80" y="116.30" width="12.8" height="17.30" fill="#86efac"/><rect x="55.20" y="0" width="12.8" height="133.60" fill="#f3f4f6"/><rect x="55.20" y="118.00" width="12.8" height="15.60" fill="#86efac"/><rect x="73.60" y="0" width="12.8" height="133.60" fill="#f3f4f6"/><rect x="73.60" y="118.00" width="12.8" height="15.60" fill="#86efac"/><rect x="92.00" y="0" width="12.8" height="133.60" fill="#f3f4f6"/><rect x="92.00" y="118.00" width="12.8" height="15.60" fill="#86efac"/><rect x="110.40" y="0" width="12.8" height="133.60" fill="#f3f4f6"/><rect x="110.40" y="116.30" width="12.8" height="17.30" fill="#86efac"/><rect x="128.80" y="0" width="12.8" height="133.60" fill="#f3f4f6"/><rect x="128.80" y="116.30" width="12.8" height="17.30" fill="#86efac"/><rect x="147.20" y="0" width="12.8" height="133.60" fill="#f3f4f6"/><rect x="147.20" y="114.35" width="12.8" height="19.25" fill="#86efac"/><rect x="165.60" y="0" width="12.8" height="133.60" fill="#f3f4f6"/><rect x="165.60" y="116.30" width="12.8" height="17.30" fill="#86efac"/><rect x="184.00" y="0" width="12.8" height="133.60" fill="#f3f4f6"/><rect x="184.00" y="116.30" width="12.8" height="17.30" fill="#86efac"/><rect x="202.40" y="0" width="12.8" height="133.60" fill="#f3f4f6"/><rect x="202.40" y="116.30" width="12.8" height="17.30" fill="#86efac"/><rect x="220.80" y="0" width="12.8" height="133.60" fill="#f3f4f6"/><rect x="220.80" y="117.90" width="12.8" height="15.70" fill="#86efac"/><rect x="239.20" y="0" width="12.8" height="133.60" fill="#f3f4f6"/><rect x="239.20" y="116.30" width="12.8" height="17.30" fill="#86efac"/><rect x="257.60" y="0" width="12.8" height="133.60" fill="#f3f4f6"/><rect x="257.60" y="112.40" width="12.8" height="21.20" fill="#86efac"/><rect x="276.00" y="0" width="12.8" height="133.60" fill="#f3f4f6"/><rect x="276.00" y="112.40" width="12.8" height="21.20" fill="#86efac"/><rect x="294.40" y="0" width="12.8" height="133.60" fill="#f3f4f6"/><rect x="294.40" y="114.35" width="12.8" height="19.25" fill="#86efac"/><rect x="312.80" y="0" width="12.8" height="133.60" fill="#f3f4f6"/><rect x="312.80" y="116.30" width="12.8" height="17.30" fill="#86efac"/><rect x="331.20" y="0" width="12.8" height="133.60" fill="#f3f4f6"/><rect x="331.20" y="116.30" width="12.8" height="17.30" fill="#86efac"/><rect x="349.60" y="0" width="12.8" height="133.60" fill="#f3f4f6"/><rect x="349.60" y="117.90" width="12.8" height="15.70" fill="#86efac"/><rect x="368.00" y="0" width="12.8" height="133.60" fill="#f3f4f6"/><rect x="368.00" y="105.50" width="12.8" height="28.10" fill="#86efac"/><rect x="386.40" y="0" width="12.8" height="133.60" fill="#f3f4f6"/><rect x="386.40" y="103.90" width="12.8" height="29.70" fill="#86efac"/><rect x="404.80" y="0" width="12.8" height="133.60" fill="#f3f4f6"/><rect x="404.80" y="45.60" width="12.8" height="88.00" fill="#86efac"/><rect x="423.20" y="0" width="12.8" height="133.60" fill="#f3f4f6"/><rect x="423.20" y="3.60" width="12.8" height="130.00" fill="#86efac"/><rect x="441.60" y="0" width="12.8" height="133.60" fill="#f3f4f6"/><rect x="441.60" y="5.20" width="12.8" height="128.40" fill="#86efac"/><rect x="460.00" y="0" width="12.8" height="133.60" fill="#f3f4f6"/><rect x="460.00" y="5.20" width="12.8" height="128.40" fill="#86efac"/><rect x="478.40" y="0" width="12.8" height="133.60" fill="#f3f4f6"/><rect x="478.40" y="5.20" width="12.8" height="128.40" fill="#86efac"/><rect x="496.80" y="0" width="12.8" height="133.60" fill="#f3f4f6"/><rect x="496.80" y="0.00" width="12.8" height="133.60" fill="#86efac"/><rect x="515.20" y="0" width="12.8" height="133.60" fill="#f3f4f6"/><rect x="515.20" y="0.00" width="12.8" height="133.60" fill="#86efac"/><rect x="533.60" y="0" width="12.8" height="133.60" fill="#f3f4f6"/><rect x="533.60" y="0.00" width="12.8" height="133.60" fill="#86efac"/><rect x="-2.5" y="133.40" width="551.40" height="1.3" fill="#e5e7eb"/></svg>
<div style="transform:scaleX(1.0951);position:absolute;left:619.90px;top:1032.92px;font-family:'Liberation Sans', sans-serif;font-size:19.0px;line-height:19.0px;font-weight:400;color:#6b7280;white-space:nowrap;transform-origin:0 0;">17/02/2026 - 18/03/2026</div>
<div style="transform:scaleX(0.9781);position:absolute;left:598.80px;top:1065.04px;font-family:'Liberation Sans', sans-serif;font-size:18.5px;line-height:18.5px;font-weight:400;color:#c4c4c4;white-space:nowrap;transform-origin:0 0;">กราฟแสดงจำนวนผู้ใช้ 30 วันล่าสุด</div>
<div style="position:absolute;left:1100.25px;top:544.75px;width:12.5px;height:12.5px;background:#52c41a;border-radius:50%"></div>
<div style="transform:scaleX(1.1155);position:absolute;left:1125.35px;top:539.31px;font-family:'Liberation Sans', sans-serif;font-size:23.5px;line-height:23.5px;font-weight:700;color:#222222;white-space:nowrap;transform-origin:0 0;">Test | ช่วงเวลาปีที่แล้ว 08/01/69</div>
<div style="transform:scaleX(1.0244);position:absolute;left:1100.00px;top:578.84px;font-family:'Liberation Sans', sans-serif;font-size:18.5px;line-height:18.5px;font-weight:400;color:#6b7280;white-space:nowrap;transform-origin:0 0;">Test ช่วงเวลาปีที่แล้ว</div>
<div style="position:absolute;left:1601.5px;top:531.3px;width:49.5px;height:49px;border:1.5px solid #e0e0e0;border-radius:6px;box-sizing:border-box;background:#fff"></div>
<svg style="position:absolute;left:1623.5px;top:547.3px;overflow:visible;" width="6" height="18" viewBox="0 0 6 18"><circle cx="3" cy="2.5" r="1.6" fill="#333"/><circle cx="3" cy="9" r="1.6" fill="#333"/><circle cx="3" cy="15.5" r="1.6" fill="#333"/></svg>
<div style="position:absolute;left:1100px;top:687.7px;width:121px;height:39.5px;border:1.5px solid #e3e3e3;border-radius:20px;box-sizing:border-box;background:#fff"></div>
<svg style="position:absolute;left:1120.5px;top:699.7px;overflow:visible;" width="17" height="17" viewBox="0 0 17 17"><rect x="1" y="3" width="15" height="12.5" rx="1" fill="none" stroke="#333" stroke-width="1.6"/>
<path d="M1 6.8 L16 6.8" stroke="#333" stroke-width="1.6"/><path d="M5 0.5 L5 4 M12 0.5 L12 4" stroke="#333" stroke-width="1.6"/></svg>
<div style="transform:scaleX(1.0182);position:absolute;left:1145.00px;top:699.46px;font-family:'Liberation Sans', sans-serif;font-size:18.0px;line-height:18.0px;font-weight:400;color:#333333;white-space:nowrap;transform-origin:0 0;">ปีที่แล้ว</div>
<svg style="position:absolute;left:1253px;top:699px;overflow:visible;" width="17" height="17" viewBox="0 0 17 17"><rect x="1" y="3" width="15" height="12.5" rx="1" fill="none" stroke="#a6abb3" stroke-width="1.6"/>
<path d="M1 6.8 L16 6.8" stroke="#a6abb3" stroke-width="1.6"/><path d="M5 0.5 L5 4 M12 0.5 L12 4" stroke="#a6abb3" stroke-width="1.6"/></svg>
<div style="transform:scaleX(0.9532);position:absolute;left:1277.05px;top:697.35px;font-family:'Liberation Sans', sans-serif;font-size:20.5px;line-height:20.5px;font-weight:400;color:#9ca3af;white-space:nowrap;transform-origin:0 0;">สร้าง: 23/12/2025</div>
<svg style="position:absolute;left:1459.5px;top:699px;overflow:visible;" width="17" height="17" viewBox="0 0 17 17"><rect x="1" y="3" width="15" height="12.5" rx="1" fill="none" stroke="#a6abb3" stroke-width="1.6"/>
<path d="M1 6.8 L16 6.8" stroke="#a6abb3" stroke-width="1.6"/><path d="M5 0.5 L5 4 M12 0.5 L12 4" stroke="#a6abb3" stroke-width="1.6"/></svg>
<div style="transform:scaleX(0.9959);position:absolute;left:1481.01px;top:697.35px;font-family:'Liberation Sans', sans-serif;font-size:20.5px;line-height:20.5px;font-weight:400;color:#9ca3af;white-space:nowrap;transform-origin:0 0;">อัปเดต: 08/01/2026</div>
<svg style="position:absolute;left:1100.5px;top:750.5px;overflow:visible;" width="32" height="32" viewBox="0 0 32 32"><g fill="none" stroke="#d9475a" stroke-width="2.4" stroke-linecap="round">
<circle cx="18.9" cy="14.7" r="5.4"/><path d="M9.4 29.3 Q11 20.3 18.9 20.3 Q26.8 20.3 29 28.7"/>
<path d="M15.5 6.2 A4.6 4.6 0 1 0 9.6 10.2"/><path d="M2.1 23 Q3 16.8 9.2 14.2"/></g></svg>
<div style="transform:scaleX(1.1130);position:absolute;left:1142.77px;top:742.30px;font-family:'Liberation Sans', sans-serif;font-size:49.5px;line-height:49.5px;font-weight:400;color:#000000;white-space:nowrap;transform-origin:0 0;-webkit-text-stroke:0.7px #fff">8</div>
<svg style="position:absolute;left:1198px;top:743.5px;overflow:visible;" width="14" height="13" viewBox="0 0 14 13"><path d="M1 1 L13 1 L8.5 7 L8.5 12 L5.5 12 L5.5 7 Z" fill="none" stroke="#9ca3af" stroke-width="1.4" stroke-linejoin="round"/></svg>
<div style="transform:scaleX(1.1538);position:absolute;left:1218.85px;top:743.73px;font-family:'Liberation Sans', sans-serif;font-size:14.5px;line-height:14.5px;font-weight:400;color:#9ca3af;white-space:nowrap;transform-origin:0 0;">1 blocks</div>
<svg style="position:absolute;left:1196.0px;top:763.5px;overflow:visible;" width="37" height="37" viewBox="0 0 37 37"><circle cx="18.5" cy="18.5" r="18.5" fill="#f4586b"/><g fill="none" stroke="#fff" stroke-width="2.4" stroke-linecap="round" stroke-linejoin="round"><rect x="9.5" y="10" width="18" height="17" rx="1.5"/><rect x="12.5" y="13" width="6" height="5"/><path d="M21 14 L25 14 M21 17 L25 17 M12.5 21 L25 21 M12.5 24 L25 24"/></g></svg>
<svg style="position:absolute;left:1240.0px;top:763.5px;overflow:visible;" width="37" height="37" viewBox="0 0 37 37"><circle cx="18.5" cy="18.5" r="18.5" fill="#f4586b"/><g fill="none" stroke="#fff" stroke-width="2.4" stroke-linecap="round" stroke-linejoin="round"><rect x="10" y="11" width="15" height="15" rx="1.5"/><path d="M10 15.5 L25 15.5 M14 8.5 L14 12 M21 8.5 L21 12"/><circle cx="24.5" cy="25" r="4.5" fill="#fff"/><path d="M24.5 23 L24.5 25.5 L26 26.5" stroke="#f15a6c" stroke-width="1.4"/></g></svg>
<svg style="position:absolute;left:1284.0px;top:763.5px;overflow:visible;" width="37" height="37" viewBox="0 0 37 37"><circle cx="18.5" cy="18.5" r="18.5" fill="#f4586b"/><g fill="none" stroke="#fff" stroke-width="2.4" stroke-linecap="round" stroke-linejoin="round"><path d="M12 24 L12 17 Q12 10.5 18.5 10.5 Q25 10.5 25 17 L25 24 L27 26 L10 26 Z"/><path d="M16.5 28.5 Q18.5 30.5 20.5 28.5"/><path d="M9 14 Q9.5 10 12 8 M28 14 Q27.5 10 25 8"/><path d="M18.5 8 L18.5 10.5"/></g></svg>
<svg style="position:absolute;left:1328.0px;top:763.5px;overflow:visible;" width="37" height="37" viewBox="0 0 37 37"><circle cx="18.5" cy="18.5" r="18.5" fill="#f4586b"/><g fill="none" stroke="#fff" stroke-width="2.4" stroke-linecap="round" stroke-linejoin="round"><path d="M18.5 8.5 L21.5 11 L25.5 10.8 L26 14.8 L28.5 18 L26 21.5 L25.5 25.5 L21.5 25.5 L18.5 28 L15.5 25.5 L11.5 25.5 L11 21.5 L8.5 18 L11 14.8 L11.5 10.8 L15.5 11 Z"/><path d="M18.5 14 L19.8 16.8 L22.5 17 L20.4 19 L21 22 L18.5 20.5 L16 22 L16.6 19 L14.5 17 L17.2 16.8 Z" fill="#fff" stroke-width="1"/></g></svg>
<svg style="position:absolute;left:1372.0px;top:763.5px;overflow:visible;" width="37" height="37" viewBox="0 0 37 37"><circle cx="18.5" cy="18.5" r="18.5" fill="#f4586b"/><g fill="none" stroke="#fff" stroke-width="2.4" stroke-linecap="round" stroke-linejoin="round"><path d="M9.5 11.5 L15 9.5 L22 11.5 L27.5 9.5 L27.5 25.5 L22 27.5 L15 25.5 L9.5 27.5 Z"/><path d="M15 9.5 L15 25.5 M22 11.5 L22 27.5"/></g></svg>
<svg style="position:absolute;left:1102.6px;top:844.35px;overflow:visible;" width="546.4" height="142.35" viewBox="0 0 546.4 142.35"><rect x="0.00" y="0" width="12.8" height="140.35" fill="#f3f4f6"/><rect x="0.00" y="13.85" width="12.8" height="126.50" fill="#86efac"/><rect x="18.40" y="0" width="12.8" height="140.35" fill="#f3f4f6"/><rect x="18.40" y="13.85" width="12.8" height="126.50" fill="#86efac"/><rect x="36.80" y="0" width="12.8" height="140.35" fill="#f3f4f6"/><rect x="36.80" y="0.00" width="12.8" height="140.35" fill="#86efac"/><rect x="55.20" y="0" width="12.8" height="140.35" fill="#f3f4f6"/><rect x="55.20" y="13.85" width="12.8" height="126.50" fill="#86efac"/><rect x="73.60" y="0" width="12.8" height="140.35" fill="#f3f4f6"/><rect x="73.60" y="13.85" width="12.8" height="126.50" fill="#86efac"/><rect x="92.00" y="0" width="12.8" height="140.35" fill="#f3f4f6"/><rect x="92.00" y="13.85" width="12.8" height="126.50" fill="#86efac"/><rect x="110.40" y="0" width="12.8" height="140.35" fill="#f3f4f6"/><rect x="110.40" y="13.85" width="12.8" height="126.50" fill="#86efac"/><rect x="128.80" y="0" width="12.8" height="140.35" fill="#f3f4f6"/><rect x="128.80" y="13.85" width="12.8" height="126.50" fill="#86efac"/><rect x="147.20" y="0" width="12.8" height="140.35" fill="#f3f4f6"/><rect x="147.20" y="13.85" width="12.8" height="126.50" fill="#86efac"/><rect x="165.60" y="0" width="12.8" height="140.35" fill="#f3f4f6"/><rect x="165.60" y="13.85" width="12.8" height="126.50" fill="#86efac"/><rect x="184.00" y="0" width="12.8" height="140.35" fill="#f3f4f6"/><rect x="184.00" y="13.85" width="12.8" height="126.50" fill="#86efac"/><rect x="202.40" y="0" width="12.8" height="140.35" fill="#f3f4f6"/><rect x="202.40" y="13.85" width="12.8" height="126.50" fill="#86efac"/><rect x="220.80" y="0" width="12.8" height="140.35" fill="#f3f4f6"/><rect x="220.80" y="13.85" width="12.8" height="126.50" fill="#86efac"/><rect x="239.20" y="0" width="12.8" height="140.35" fill="#f3f4f6"/><rect x="239.20" y="13.85" width="12.8" height="126.50" fill="#86efac"/><rect x="257.60" y="0" width="12.8" height="140.35" fill="#f3f4f6"/><rect x="257.60" y="13.85" width="12.8" height="126.50" fill="#86efac"/><rect x="276.00" y="0" width="12.8" height="140.35" fill="#f3f4f6"/><rect x="276.00" y="13.85" width="12.8" height="126.50" fill="#86efac"/><rect x="294.40" y="0" width="12.8" height="140.35" fill="#f3f4f6"/><rect x="294.40" y="87.25" width="12.8" height="53.10" fill="#86efac"/><rect x="312.80" y="0" width="12.8" height="140.35" fill="#f3f4f6"/><rect x="312.80" y="73.55" width="12.8" height="66.80" fill="#86efac"/><rect x="331.20" y="0" width="12.8" height="140.35" fill="#f3f4f6"/><rect x="331.20" y="73.55" width="12.8" height="66.80" fill="#86efac"/><rect x="349.60" y="0" width="12.8" height="140.35" fill="#f3f4f6"/><rect x="349.60" y="73.55" width="12.8" height="66.80" fill="#86efac"/><rect x="368.00" y="0" width="12.8" height="140.35" fill="#f3f4f6"/><rect x="368.00" y="0.00" width="12.8" height="140.35" fill="#86efac"/><rect x="386.40" y="0" width="12.8" height="140.35" fill="#f3f4f6"/><rect x="386.40" y="13.85" width="12.8" height="126.50" fill="#86efac"/><rect x="404.80" y="0" width="12.8" height="140.35" fill="#f3f4f6"/><rect x="404.80" y="13.85" width="12.8" height="126.50" fill="#86efac"/><rect x="423.20" y="0" width="12.8" height="140.35" fill="#f3f4f6"/><rect x="423.20" y="27.75" width="12.8" height="112.60" fill="#86efac"/><rect x="441.60" y="0" width="12.8" height="140.35" fill="#f3f4f6"/><rect x="441.60" y="27.75" width="12.8" height="112.60" fill="#86efac"/><rect x="460.00" y="0" width="12.8" height="140.35" fill="#f3f4f6"/><rect x="460.00" y="27.75" width="12.8" height="112.60" fill="#86efac"/><rect x="478.40" y="0" width="12.8" height="140.35" fill="#f3f4f6"/><rect x="478.40" y="27.75" width="12.8" height="112.60" fill="#86efac"/><rect x="496.80" y="0" width="12.8" height="140.35" fill="#f3f4f6"/><rect x="496.80" y="27.75" width="12.8" height="112.60" fill="#86efac"/><rect x="515.20" y="0" width="12.8" height="140.35" fill="#f3f4f6"/><rect x="515.20" y="27.75" width="12.8" height="112.60" fill="#86efac"/><rect x="533.60" y="0" width="12.8" height="140.35" fill="#f3f4f6"/><rect x="533.60" y="27.75" width="12.8" height="112.60" fill="#86efac"/><rect x="-2.5" y="140.15" width="551.40" height="1.3" fill="#e5e7eb"/></svg>
<div style="transform:scaleX(1.1010);position:absolute;left:1260.90px;top:1008.12px;font-family:'Liberation Sans', sans-serif;font-size:19.0px;line-height:19.0px;font-weight:400;color:#6b7280;white-space:nowrap;transform-origin:0 0;">17/02/2026 - 18/03/2026</div>
<div style="transform:scaleX(0.9872);position:absolute;left:1240.02px;top:1040.04px;font-family:'Liberation Sans', sans-serif;font-size:18.5px;line-height:18.5px;font-weight:400;color:#c4c4c4;white-space:nowrap;transform-origin:0 0;">กราฟแสดงจำนวนผู้ใช้ 30 วันล่าสุด</div>
<div style="position:absolute;left:1741.15px;top:544.75px;width:12.5px;height:12.5px;background:#52c41a;border-radius:50%"></div>
<div style="transform:scaleX(1.1130);position:absolute;left:1767.63px;top:539.31px;font-family:'Liberation Sans', sans-serif;font-size:23.5px;line-height:23.5px;font-weight:700;color:#222222;white-space:nowrap;transform-origin:0 0;">ซื้อถี่ แต่ยอดลดลง</div>
<div style="transform:scaleX(0.9681);position:absolute;left:1740.43px;top:578.84px;font-family:'Liberation Sans', sans-serif;font-size:18.5px;line-height:18.5px;font-weight:400;color:#6b7280;white-space:nowrap;transform-origin:0 0;">จำนวนสั่งซื้อมากกว่า 4 และเป็นสมาชิก</div>
<div style="position:absolute;left:2244px;top:531px;width:49.5px;height:49px;border:1.5px solid #e0e0e0;border-radius:6px;box-sizing:border-box;background:#fff"></div>
<svg style="position:absolute;left:2266px;top:547px;overflow:visible;" width="6" height="18" viewBox="0 0 6 18"><circle cx="3" cy="2.5" r="1.6" fill="#333"/><circle cx="3" cy="9" r="1.6" fill="#333"/><circle cx="3" cy="15.5" r="1.6" fill="#333"/></svg>
<div style="position:absolute;left:1741.7px;top:687.7px;width:158.6px;height:39.5px;border:1.5px solid #e3e3e3;border-radius:20px;box-sizing:border-box;background:#fff"></div>
<svg style="position:absolute;left:1762.2px;top:699.7px;overflow:visible;" width="17" height="17" viewBox="0 0 17 17"><rect x="1" y="3" width="15" height="12.5" rx="1" fill="none" stroke="#333" stroke-width="1.6"/>
<path d="M1 6.8 L16 6.8" stroke="#333" stroke-width="1.6"/><path d="M5 0.5 L5 4 M12 0.5 L12 4" stroke="#333" stroke-width="1.6"/></svg>
<div style="transform:scaleX(1.0562);position:absolute;left:1785.94px;top:699.46px;font-family:'Liberation Sans', sans-serif;font-size:18.0px;line-height:18.0px;font-weight:400;color:#333333;white-space:nowrap;transform-origin:0 0;">60 วันล่าสุด</div>
<svg style="position:absolute;left:2117px;top:699px;overflow:visible;" width="17" height="17" viewBox="0 0 17 17"><rect x="1" y="3" width="15" height="12.5" rx="1" fill="none" stroke="#a6abb3" stroke-width="1.6"/>
<path d="M1 6.8 L16 6.8" stroke="#a6abb3" stroke-width="1.6"/><path d="M5 0.5 L5 4 M12 0.5 L12 4" stroke="#a6abb3" stroke-width="1.6"/></svg>
<div style="transform:scaleX(0.9478);position:absolute;left:2141.63px;top:697.35px;font-family:'Liberation Sans', sans-serif;font-size:20.5px;line-height:20.5px;font-weight:400;color:#9ca3af;white-space:nowrap;transform-origin:0 0;">สร้าง: 26/12/2025</div>
<svg style="position:absolute;left:2104.5px;top:731px;overflow:visible;" width="17" height="17" viewBox="0 0 17 17"><rect x="1" y="3" width="15" height="12.5" rx="1" fill="none" stroke="#a6abb3" stroke-width="1.6"/>
<path d="M1 6.8 L16 6.8" stroke="#a6abb3" stroke-width="1.6"/><path d="M5 0.5 L5 4 M12 0.5 L12 4" stroke="#a6abb3" stroke-width="1.6"/></svg>
<div style="transform:scaleX(0.9716);position:absolute;left:2126.66px;top:729.35px;font-family:'Liberation Sans', sans-serif;font-size:20.5px;line-height:20.5px;font-weight:400;color:#9ca3af;white-space:nowrap;transform-origin:0 0;">อัปเดต: 27/01/2026</div>
<svg style="position:absolute;left:1742px;top:774.5px;overflow:visible;" width="32" height="32" viewBox="0 0 32 32"><g fill="none" stroke="#d9475a" stroke-width="2.4" stroke-linecap="round">
<circle cx="18.9" cy="14.7" r="5.4"/><path d="M9.4 29.3 Q11 20.3 18.9 20.3 Q26.8 20.3 29 28.7"/>
<path d="M15.5 6.2 A4.6 4.6 0 1 0 9.6 10.2"/><path d="M2.1 23 Q3 16.8 9.2 14.2"/></g></svg>
<div style="transform:scaleX(1.0373);position:absolute;left:1783.91px;top:767.30px;font-family:'Liberation Sans', sans-serif;font-size:49.5px;line-height:49.5px;font-weight:400;color:#000000;white-space:nowrap;transform-origin:0 0;-webkit-text-stroke:0.7px #fff">74</div>
<svg style="position:absolute;left:1866px;top:769px;overflow:visible;" width="14" height="13" viewBox="0 0 14 13"><path d="M1 1 L13 1 L8.5 7 L8.5 12 L5.5 12 L5.5 7 Z" fill="none" stroke="#9ca3af" stroke-width="1.4" stroke-linejoin="round"/></svg>
<div style="transform:scaleX(1.1679);position:absolute;left:1889.34px;top:768.73px;font-family:'Liberation Sans', sans-serif;font-size:14.5px;line-height:14.5px;font-weight:400;color:#9ca3af;white-space:nowrap;transform-origin:0 0;">2 blocks</div>
<svg style="position:absolute;left:1864.1px;top:788.5px;overflow:visible;" width="37" height="37" viewBox="0 0 37 37"><circle cx="18.5" cy="18.5" r="18.5" fill="#f4586b"/><g fill="none" stroke="#fff" stroke-width="2.4" stroke-linecap="round" stroke-linejoin="round"><path d="M12 24 L12 17 Q12 10.5 18.5 10.5 Q25 10.5 25 17 L25 24 L27 26 L10 26 Z"/><path d="M16.5 28.5 Q18.5 30.5 20.5 28.5"/><path d="M9 14 Q9.5 10 12 8 M28 14 Q27.5 10 25 8"/><path d="M18.5 8 L18.5 10.5"/></g></svg>
<svg style="position:absolute;left:1907.7px;top:788.5px;overflow:visible;" width="37" height="37" viewBox="0 0 37 37"><circle cx="18.5" cy="18.5" r="18.5" fill="#f4586b"/><g fill="none" stroke="#fff" stroke-width="2.4" stroke-linecap="round" stroke-linejoin="round"><rect x="11" y="14" width="15" height="14" rx="1.5"/><path d="M14.5 14 L14.5 12 Q14.5 8.5 18.5 8.5 Q22.5 8.5 22.5 12 L22.5 14"/><path d="M15 18 Q18.5 21.5 22 18"/></g></svg>
<svg style="position:absolute;left:1951.5px;top:788.5px;overflow:visible;" width="37" height="37" viewBox="0 0 37 37"><circle cx="18.5" cy="18.5" r="18.5" fill="#f4586b"/><g fill="none" stroke="#fff" stroke-width="2.4" stroke-linecap="round" stroke-linejoin="round"><path d="M10 13.5 L14 18.5 L18.5 10.5 L23 18.5 L27 13.5 L25.5 24 L11.5 24 Z"/><path d="M11.5 27 L25.5 27"/></g></svg>
<svg style="position:absolute;left:1745.1px;top:880.1px;overflow:visible;" width="546.4" height="131.5" viewBox="0 0 546.4 131.5"><rect x="0.00" y="0" width="12.8" height="129.50" fill="#f3f4f6"/><rect x="0.00" y="110.50" width="12.8" height="19.00" fill="#86efac"/><rect x="18.40" y="0" width="12.8" height="129.50" fill="#f3f4f6"/><rect x="18.40" y="110.50" width="12.8" height="19.00" fill="#86efac"/><rect x="36.80" y="0" width="12.8" height="129.50" fill="#f3f4f6"/><rect x="36.80" y="110.50" width="12.8" height="19.00" fill="#86efac"/><rect x="55.20" y="0" width="12.8" height="129.50" fill="#f3f4f6"/><rect x="55.20" y="110.50" width="12.8" height="19.00" fill="#86efac"/><rect x="73.60" y="0" width="12.8" height="129.50" fill="#f3f4f6"/><rect x="73.60" y="110.50" width="12.8" height="19.00" fill="#86efac"/><rect x="92.00" y="0" width="12.8" height="129.50" fill="#f3f4f6"/><rect x="92.00" y="110.50" width="12.8" height="19.00" fill="#86efac"/><rect x="110.40" y="0" width="12.8" height="129.50" fill="#f3f4f6"/><rect x="110.40" y="109.10" width="12.8" height="20.40" fill="#86efac"/><rect x="128.80" y="0" width="12.8" height="129.50" fill="#f3f4f6"/><rect x="128.80" y="109.10" width="12.8" height="20.40" fill="#86efac"/><rect x="147.20" y="0" width="12.8" height="129.50" fill="#f3f4f6"/><rect x="147.20" y="107.00" width="12.8" height="22.50" fill="#86efac"/><rect x="165.60" y="0" width="12.8" height="129.50" fill="#f3f4f6"/><rect x="165.60" y="109.10" width="12.8" height="20.40" fill="#86efac"/><rect x="184.00" y="0" width="12.8" height="129.50" fill="#f3f4f6"/><rect x="184.00" y="109.10" width="12.8" height="20.40" fill="#86efac"/><rect x="202.40" y="0" width="12.8" height="129.50" fill="#f3f4f6"/><rect x="202.40" y="109.10" width="12.8" height="20.40" fill="#86efac"/><rect x="220.80" y="0" width="12.8" height="129.50" fill="#f3f4f6"/><rect x="220.80" y="109.10" width="12.8" height="20.40" fill="#86efac"/><rect x="239.20" y="0" width="12.8" height="129.50" fill="#f3f4f6"/><rect x="239.20" y="107.00" width="12.8" height="22.50" fill="#86efac"/><rect x="257.60" y="0" width="12.8" height="129.50" fill="#f3f4f6"/><rect x="257.60" y="103.80" width="12.8" height="25.70" fill="#86efac"/><rect x="276.00" y="0" width="12.8" height="129.50" fill="#f3f4f6"/><rect x="276.00" y="103.80" width="12.8" height="25.70" fill="#86efac"/><rect x="294.40" y="0" width="12.8" height="129.50" fill="#f3f4f6"/><rect x="294.40" y="103.80" width="12.8" height="25.70" fill="#86efac"/><rect x="312.80" y="0" width="12.8" height="129.50" fill="#f3f4f6"/><rect x="312.80" y="103.80" width="12.8" height="25.70" fill="#86efac"/><rect x="331.20" y="0" width="12.8" height="129.50" fill="#f3f4f6"/><rect x="331.20" y="103.80" width="12.8" height="25.70" fill="#86efac"/><rect x="349.60" y="0" width="12.8" height="129.50" fill="#f3f4f6"/><rect x="349.60" y="103.80" width="12.8" height="25.70" fill="#86efac"/><rect x="368.00" y="0" width="12.8" height="129.50" fill="#f3f4f6"/><rect x="368.00" y="95.10" width="12.8" height="34.40" fill="#86efac"/><rect x="386.40" y="0" width="12.8" height="129.50" fill="#f3f4f6"/><rect x="386.40" y="88.10" width="12.8" height="41.40" fill="#86efac"/><rect x="404.80" y="0" width="12.8" height="129.50" fill="#f3f4f6"/><rect x="404.80" y="42.00" width="12.8" height="87.50" fill="#86efac"/><rect x="423.20" y="0" width="12.8" height="129.50" fill="#f3f4f6"/><rect x="423.20" y="40.50" width="12.8" height="89.00" fill="#86efac"/><rect x="441.60" y="0" width="12.8" height="129.50" fill="#f3f4f6"/><rect x="441.60" y="40.50" width="12.8" height="89.00" fill="#86efac"/><rect x="460.00" y="0" width="12.8" height="129.50" fill="#f3f4f6"/><rect x="460.00" y="42.00" width="12.8" height="87.50" fill="#86efac"/><rect x="478.40" y="0" width="12.8" height="129.50" fill="#f3f4f6"/><rect x="478.40" y="42.00" width="12.8" height="87.50" fill="#86efac"/><rect x="496.80" y="0" width="12.8" height="129.50" fill="#f3f4f6"/><rect x="496.80" y="3.60" width="12.8" height="125.90" fill="#86efac"/><rect x="515.20" y="0" width="12.8" height="129.50" fill="#f3f4f6"/><rect x="515.20" y="0.00" width="12.8" height="129.50" fill="#86efac"/><rect x="533.60" y="0" width="12.8" height="129.50" fill="#f3f4f6"/><rect x="533.60" y="0.00" width="12.8" height="129.50" fill="#86efac"/><rect x="-2.5" y="129.30" width="551.40" height="1.3" fill="#e5e7eb"/></svg>
<div style="transform:scaleX(1.0946);position:absolute;left:1904.06px;top:1033.62px;font-family:'Liberation Sans', sans-serif;font-size:19.0px;line-height:19.0px;font-weight:400;color:#6b7280;white-space:nowrap;transform-origin:0 0;">17/02/2026 - 18/03/2026</div>
<div style="transform:scaleX(0.9792);position:absolute;left:1882.41px;top:1064.64px;font-family:'Liberation Sans', sans-serif;font-size:18.5px;line-height:18.5px;font-weight:400;color:#c4c4c4;white-space:nowrap;transform-origin:0 0;">กราฟแสดงจำนวนผู้ใช้ 30 วันล่าสุด</div>
<div style="position:absolute;left:2286.3px;top:984.7px;width:83.4px;height:83.4px;background:#b0232a;border-radius:50%;box-shadow:0 4px 10px rgba(0,0,0,.18)"></div>
<svg style="position:absolute;left:2303.5px;top:1008px;overflow:visible;" width="48" height="40" viewBox="0 0 48 40"><defs><linearGradient id="cf" x1="0" y1="0" x2="0" y2="1"><stop offset="0" stop-color="#ffffff"/><stop offset="1" stop-color="#e8b8c0"/></linearGradient></defs>
<path d="M2 5 Q2 2 5 1.8 L42 0 Q46 0 46 3.5 L46.5 28 Q46.5 31 43.5 31.2 L29 32 L24.5 38.5 L21 32.5 L5.5 33.5 Q2.5 33.5 2.5 30.5 Z" fill="url(#cf)"/></svg>
</body></html>
